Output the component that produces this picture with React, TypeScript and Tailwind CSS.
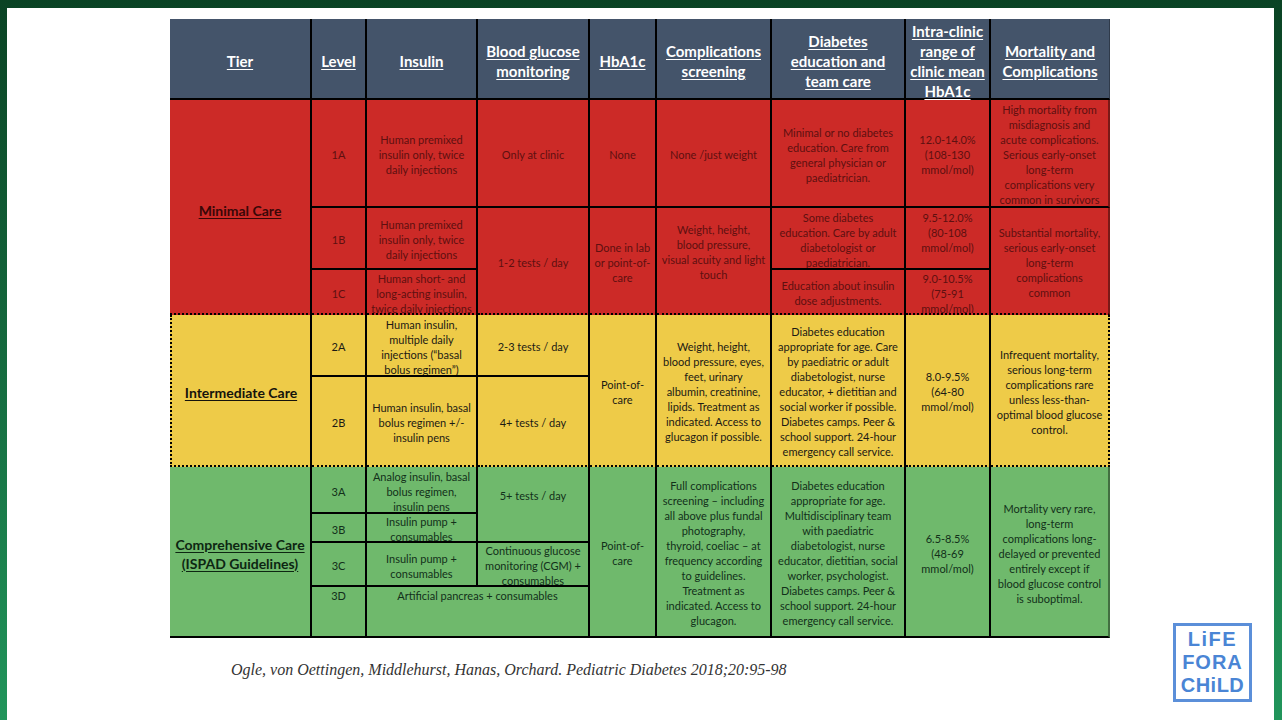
import React from "react"

type Tone = "head" | "red" | "yellow" | "green"

interface CellDef {
  text: string
  tone: Tone
  tier?: boolean
  cls?: string
}

// borders between tiers are dotted, everything else solid black
const DOT_B = "[border-bottom-style:dotted]"
const LAST = "border-r border-r-black/40"

const toneClass: Record<Tone, string> = {
  head: "bg-[#44546a] text-white",
  red: "bg-[#cc2a27] text-[#5e1010]",
  yellow: "bg-[#eecb48] text-[#1c1a14]",
  green: "bg-[#6fb96c] text-[#12301a]",
}

const tierText: Record<Tone, string> = {
  head: "",
  red: "text-[#3a0707]",
  yellow: "text-[#15130c]",
  green: "text-[#0d2612]",
}

const headers = [
  "Tier",
  "Level",
  "Insulin",
  "Blood glucose\nmonitoring",
  "HbA1c",
  "Complications\nscreening",
  "Diabetes\neducation and\nteam care",
  "Intra-clinic\nrange of\nclinic mean\nHbA1c",
  "Mortality and\nComplications",
]

const cells: CellDef[] = [
  // 1A
  { text: "Minimal Care", tone: "red", tier: true, cls: "row-span-3 pt-[8px] " + DOT_B },
  { text: "1A", tone: "red" },
  { text: "Human premixed\ninsulin only, twice\ndaily injections", tone: "red" },
  { text: "Only at clinic", tone: "red" },
  { text: "None", tone: "red" },
  { text: "None /just weight", tone: "red" },
  { text: "Minimal or no diabetes\neducation. Care from\ngeneral physician or\npaediatrician.", tone: "red" },
  { text: "12.0-14.0%\n(108-130\nmmol/mol)", tone: "red" },
  {
    text: "High mortality from\nmisdiagnosis and\nacute complications.\nSerious early-onset\nlong-term\ncomplications very\ncommon in survivors",
    tone: "red",
    cls: LAST,
  },
  // 1B
  { text: "1B", tone: "red" },
  { text: "Human premixed\ninsulin only, twice\ndaily injections", tone: "red" },
  { text: "1-2 tests / day", tone: "red", cls: "row-span-2 " + DOT_B },
  { text: "Done in lab\nor point-of-\ncare", tone: "red", cls: "row-span-2 " + DOT_B },
  {
    text: "Weight, height,\nblood pressure,\nvisual acuity and light\ntouch",
    tone: "red",
    cls: "row-span-2 pb-[20px] " + DOT_B,
  },
  { text: "Some diabetes\neducation. Care by adult\ndiabetologist or\npaediatrician.", tone: "red" },
  { text: "9.5-12.0%\n(80-108\nmmol/mol)", tone: "red", cls: "pb-[14px]" },
  {
    text: "Substantial mortality,\nserious early-onset\nlong-term\ncomplications\ncommon",
    tone: "red",
    cls: "row-span-2 " + LAST + " " + DOT_B,
  },
  // 1C
  { text: "1C", tone: "red", cls: DOT_B },
  { text: "Human short- and\nlong-acting insulin,\ntwice daily injections", tone: "red", cls: DOT_B },
  { text: "Education about insulin\ndose adjustments.", tone: "red", cls: DOT_B },
  { text: "9.0-10.5%\n(75-91\nmmol/mol)", tone: "red", cls: DOT_B },
  // 2A
  {
    text: "Intermediate Care",
    tone: "yellow",
    tier: true,
    cls: "row-span-2 pt-[5px] border-l-2 [border-left-style:dotted] " + DOT_B,
  },
  { text: "2A", tone: "yellow" },
  { text: "Human insulin,\nmultiple daily\ninjections (“basal\nbolus regimen”)", tone: "yellow" },
  { text: "2-3 tests / day", tone: "yellow" },
  { text: "Point-of-\ncare", tone: "yellow", cls: "row-span-2 " + DOT_B },
  {
    text: "Weight, height,\nblood pressure, eyes,\nfeet, urinary\nalbumin, creatinine,\nlipids. Treatment as\nindicated. Access to\nglucagon if possible.",
    tone: "yellow",
    cls: "row-span-2 " + DOT_B,
  },
  {
    text: "Diabetes education\nappropriate for age. Care\nby paediatric or adult\ndiabetologist, nurse\neducator, + dietitian and\nsocial worker if possible.\nDiabetes camps. Peer &\nschool support. 24-hour\nemergency call service.",
    tone: "yellow",
    cls: "row-span-2 " + DOT_B,
  },
  { text: "8.0-9.5%\n(64-80\nmmol/mol)", tone: "yellow", cls: "row-span-2 " + DOT_B },
  {
    text: "Infrequent mortality,\nserious long-term\ncomplications rare\nunless less-than-\noptimal blood glucose\ncontrol.",
    tone: "yellow",
    cls: "row-span-2 [border-right-style:dotted] " + DOT_B,
  },
  // 2B
  { text: "2B", tone: "yellow", cls: DOT_B },
  { text: "Human insulin, basal\nbolus regimen +/-\ninsulin pens", tone: "yellow", cls: DOT_B },
  { text: "4+ tests / day", tone: "yellow", cls: DOT_B },
  // 3A
  { text: "Comprehensive Care\n(ISPAD Guidelines)", tone: "green", tier: true, cls: "row-span-4 pt-[4px]" },
  { text: "3A", tone: "green" },
  { text: "Analog insulin, basal\nbolus regimen,\ninsulin pens", tone: "green" },
  { text: "5+ tests / day", tone: "green", cls: "row-span-2 pb-[20px]" },
  { text: "Point-of-\ncare", tone: "green", cls: "row-span-4" },
  {
    text: "Full complications\nscreening – including\nall above plus fundal\nphotography,\nthyroid, coeliac – at\nfrequency according\nto guidelines.\nTreatment as\nindicated. Access to\nglucagon.",
    tone: "green",
    cls: "row-span-4",
  },
  {
    text: "Diabetes education\nappropriate for age.\nMultidisciplinary team\nwith paediatric\ndiabetologist, nurse\neducator, dietitian, social\nworker, psychologist.\nDiabetes camps. Peer &\nschool support. 24-hour\nemergency call service.",
    tone: "green",
    cls: "row-span-4",
  },
  { text: "6.5-8.5%\n(48-69\nmmol/mol)", tone: "green", cls: "row-span-4" },
  {
    text: "Mortality very rare,\nlong-term\ncomplications long-\ndelayed or prevented\nentirely except if\nblood glucose control\nis suboptimal.",
    tone: "green",
    cls: "row-span-4 " + LAST,
  },
  // 3B
  { text: "3B", tone: "green" },
  { text: "Insulin pump +\nconsumables", tone: "green" },
  // 3C
  { text: "3C", tone: "green" },
  { text: "Insulin pump +\nconsumables", tone: "green" },
  { text: "Continuous glucose\nmonitoring (CGM) +\nconsumables", tone: "green" },
  // 3D
  { text: "3D", tone: "green", cls: "!items-start !pt-px" },
  { text: "Artificial pancreas + consumables", tone: "green", cls: "col-span-2 !items-start !pt-px" },
]

function Cell({ def }: { def: CellDef }) {
  return (
    <div
      className={`flex items-center justify-center overflow-hidden border-r-2 border-b-2 border-black pt-[3px] text-center whitespace-pre ${toneClass[def.tone]} ${def.cls ?? ""}`}
    >
      {def.tier ? (
        <span className={`text-[14px] font-bold underline underline-offset-2 leading-[19px] ${tierText[def.tone]}`}>
          {def.text}
        </span>
      ) : (
        <span className="text-[11px] leading-[15px]">{def.text}</span>
      )}
    </div>
  )
}

function CareTable() {
  return (
    <div className="grid w-[940px] grid-cols-[142px_55px_111px_112px_67px_115px_134px_85px_119px] grid-rows-[81px_108px_62px_45px_62px_90px_47px_29px_44px_51px] font-[Lato,sans-serif]">
      {headers.map((h, i) => (
        <div
          key={h}
          className={`flex items-center justify-center border-b-2 border-black bg-[#44546a] pt-[4px] text-center whitespace-pre ${
            i === headers.length - 1 ? "border-r border-r-black/30" : "border-r-2"
          }`}
        >
          <span className="text-[15px] font-bold leading-[20px] text-white underline underline-offset-2">{h}</span>
        </div>
      ))}
      {cells.map((c, i) => (
        <Cell key={i} def={c} />
      ))}
    </div>
  )
}

function Logo() {
  return (
    <div className="flex h-[79px] w-[79px] flex-col items-center justify-center border-[3px] border-[#5b8fd9] font-['Liberation_Sans',sans-serif] text-[20px] font-bold leading-[23px] text-[#4a85d5]">
      <span className="tracking-[1.5px]">LiFE</span>
      <span className="tracking-[1px]">FORA</span>
      <span className="tracking-[0.5px]">CHiLD</span>
    </div>
  )
}

export default function App() {
  return (
    <div className="flex h-[720px] w-[1282px] bg-linear-to-b from-[#0a4324] to-[#21955b] pt-[8px] pr-[8px] pl-[7px]">
      <div className="flex flex-1 bg-white">
        <div className="flex flex-col pt-[11px] pl-[163px]">
          <CareTable />
          <p className="mt-[22px] ml-[61px] font-['Liberation_Serif',serif] text-[16px] italic leading-[20px] text-[#333]">
            Ogle, von Oettingen, Middlehurst, Hanas, Orchard. Pediatric Diabetes 2018;20:95-98
          </p>
        </div>
        <div className="mr-[22px] mb-[18px] ml-auto self-end">
          <Logo />
        </div>
      </div>
    </div>
  )
}
